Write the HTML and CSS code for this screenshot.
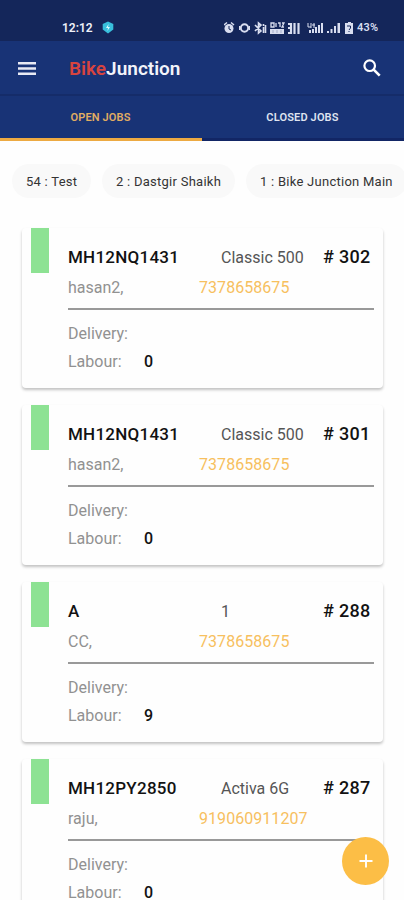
FILE: index.html
```
<!DOCTYPE html>
<html lang="en">
<head>
<meta charset="utf-8">
<title>BikeJunction</title>
<link rel="stylesheet" href="styles.css">
</head>
<body>
<div class="screen">
  <div class="status">
    <span class="clock">12:12</span>
    <svg class="shield" width="12" height="13" viewBox="0 0 12 13"><path d="M6 .5 11.300 3v5.500L6 12.500.7 8.500V3z" fill="#38bfdc"/><path d="M6.600 3 4 7h2l-.6 3L8 6H6z" fill="#d8fbff"/></svg>
    <svg class="tray" width="132" height="14" viewBox="0 0 132 14" fill="#d9def0">
      <circle cx="5" cy="7.500" r="4.500"/><path d="M0 4 3 1.500M10 4 7 1.500" stroke="#d9def0" stroke-width="1.500"/><path d="M5 5v3l2 1" fill="none" stroke="#14265a"/>
      <circle cx="20.500" cy="7" r="3.700" fill="none" stroke="#d9def0" stroke-width="2"/><path d="M15 5v4h1V5zM25 5v4h1V5z"/>
      <path d="m31 4 6 6-2.500 2V2L37 4l-6 6M39.500 3v2M39.500 6v6M41.500 4v8" fill="none" stroke="#d9def0" stroke-width="1.600"/>
      <path d="M47 2h3v4h-3zM52 2v4M54 2h2v4M58 2h2l-2 4h2" fill="none" stroke="#d9def0" stroke-width="1.300"/><path d="M46 8h14v5H46z"/><path d="M49 9v3M53 9v3M57 9v3" stroke="#a3acc9"/>
      <path d="M64 3h3v9h-3M64 7h3M70.500 2v11M74.500 2v11" fill="none" stroke="#d9def0" stroke-width="2.200"/>
      <path d="M84 2v4h3M87 2v5M90 2v5M88 4h3" fill="none" stroke="#d9def0"/><path d="M85 9h2v3h-2zM88 8h2v4h-2zM91 6h2v6h-2zM94 4h2v8h-2zM97 2h2v10h-2z"/>
      <path d="M103 10h2v2h-2zM106.500 8h2v4h-2zM110 5h2v7h-2zM113.500 2h2.500v10h-2.500z"/>
      <path d="M122 2h2V1h3v1h2v11h-8V2z"/><path d="M123 5h3.500v2L125 9M125 10v1" fill="none" stroke="#14265a"/>
    </svg>
    <span class="battery">43%</span>
  </div>
  <header class="appbar">
    <svg class="menu" width="18" height="13" viewBox="0 0 18 13"><path d="M0 1.200h18M0 6.500h18M0 11.800h18" stroke="#e8eaf4" stroke-width="2.400"/></svg>
    <h1 class="brand"><span class="brand-bike">Bike</span>Junction</h1>
    <svg class="search" width="18" height="18" viewBox="0 0 18 18" fill="none" stroke="#fff"><circle cx="6.700" cy="6.700" r="5.300" stroke-width="2.200"/><path d="m10.700 10.700 6 6" stroke-width="2.600"/></svg>
  </header>
  <nav class="tabs">
    <div class="tab tab-active">OPEN JOBS</div>
    <div class="tab">CLOSED JOBS</div>
  </nav>
  <div class="chips">
    <span class="chip chip-test">54 : Test</span>
    <span class="chip chip-dastgir">2 : Dastgir Shaikh</span>
    <span class="chip chip-main">1 : Bike Junction Main</span>
  </div>
  <main class="jobs">
    <article class="job">
      <div class="flag"></div>
      <div class="body">
        <div class="row head"><b class="reg">MH12NQ1431</b><span class="model">Classic 500</span><b class="num"># 302</b></div>
        <div class="row owner"><span class="name">hasan2,</span><span class="phone">7378658675</span></div>
        <div class="rule"></div>
        <div class="row delivery">Delivery:</div>
        <div class="row labour"><span class="key">Labour:</span><b class="value">0</b></div>
      </div>
    </article>
    <article class="job">
      <div class="flag"></div>
      <div class="body">
        <div class="row head"><b class="reg">MH12NQ1431</b><span class="model">Classic 500</span><b class="num"># 301</b></div>
        <div class="row owner"><span class="name">hasan2,</span><span class="phone">7378658675</span></div>
        <div class="rule"></div>
        <div class="row delivery">Delivery:</div>
        <div class="row labour"><span class="key">Labour:</span><b class="value">0</b></div>
      </div>
    </article>
    <article class="job">
      <div class="flag"></div>
      <div class="body">
        <div class="row head"><b class="reg">A</b><span class="model">1</span><b class="num"># 288</b></div>
        <div class="row owner"><span class="name">CC,</span><span class="phone">7378658675</span></div>
        <div class="rule"></div>
        <div class="row delivery">Delivery:</div>
        <div class="row labour"><span class="key">Labour:</span><b class="value">9</b></div>
      </div>
    </article>
    <article class="job">
      <div class="flag"></div>
      <div class="body">
        <div class="row head"><b class="reg">MH12PY2850</b><span class="model">Activa 6G</span><b class="num"># 287</b></div>
        <div class="row owner"><span class="name">raju,</span><span class="phone">919060911207</span></div>
        <div class="rule"></div>
        <div class="row delivery">Delivery:</div>
        <div class="row labour"><span class="key">Labour:</span><b class="value">0</b></div>
      </div>
    </article>
  </main>
  <div class="fab"><svg width="14" height="14" viewBox="0 0 14 14"><path d="M7 .5v13M.5 7h13" stroke="#fff" stroke-width="1.900"/></svg></div>
</div>
</body>
</html>
```
FILE: styles.css
```
* { box-sizing: border-box; }
body { margin: 0; font-family: Roboto, "Liberation Sans", sans-serif; background: #fefefe; }
.screen { position: relative; width: 404px; height: 900px; overflow: hidden; background: #fefefe; }

.status { display: flex; align-items: center; height: 41px; padding: 14px 0 0 62px; background: #14265a; color: #eef0f8; }
.clock { width: 40px; font-size: 12px; font-weight: 600; }
.shield { flex: none; }
.tray { flex: none; margin-left: 110px; }
.battery { margin-left: 1px; font-size: 11px; font-weight: 600; letter-spacing: .2px; color: #d9def0; }

.appbar { display: flex; align-items: center; height: 55px; padding: 0 23px 0 18px; background: #183376; border-bottom: 2px solid #152c69; }
.menu { margin-top: 2px; }
.brand { margin: 3px 0 0 33px; font-size: 19px; line-height: 24px; font-weight: 600; color: #f2f4fa; }
.brand-bike { color: #d7443f; }
.search { margin: 1px 0 0 auto; }

.tabs { display: flex; height: 45px; background: #183376; }
.tab { flex: 1; height: 45px; padding-right: 1px; border-bottom: 3px solid #122665; text-align: center; font-size: 11px; font-weight: 600; letter-spacing: .15px; line-height: 43px; color: #dfe3f0; }
.tab-active { border-bottom-color: #edaa42; color: #e1ad62; }

.chips { display: flex; gap: 11px; height: 87px; padding: 23px 0 0 12px; }
.chip { flex: none; height: 34px; padding-left: 14px; border-radius: 17px; background: #f9f9f9; font-size: 13px; letter-spacing: .26px; line-height: 35px; color: #343434; white-space: nowrap; }
.chip-test { width: 79px; }
.chip-dastgir { width: 133px; }
.chip-main { width: 161px; }

.jobs { display: flex; flex-direction: column; gap: 17px; padding: 0 21px 0 22px; }
.job { display: flex; flex: none; height: 160px; padding: 0 9px; border-radius: 4px; background: #fefefe; box-shadow: 0 2px 3px rgba(0, 0, 0, .24); }
.flag { flex: none; width: 18px; height: 45px; background: #8de293; }
.body { flex: 1; margin-left: 19px; padding-top: 18px; color: #919191; font-size: 16px; }
.row { display: flex; height: 22px; line-height: 23px; white-space: nowrap; }
.reg { width: 153px; font-size: 17px; font-weight: 500; letter-spacing: .25px; line-height: 22px; color: #121212; }
.model { width: 102px; color: #555; }
.num { font-size: 18px; font-weight: 500; letter-spacing: .3px; line-height: 22px; color: #121212; }
.owner { margin-top: 8px; }
.name { width: 131px; }
.phone { letter-spacing: .05px; color: #f7c05e; }
.rule { height: 2px; margin-top: 10px; background: #999; }
.delivery { margin-top: 12px; }
.labour { margin-top: 6px; }
.key { width: 76px; }
.value { font-weight: 500; color: #121212; }

.fab { position: absolute; left: 342px; top: 837px; display: flex; align-items: center; justify-content: center; width: 47px; height: 48px; border-radius: 50%; background: #fcbe46; }
```
